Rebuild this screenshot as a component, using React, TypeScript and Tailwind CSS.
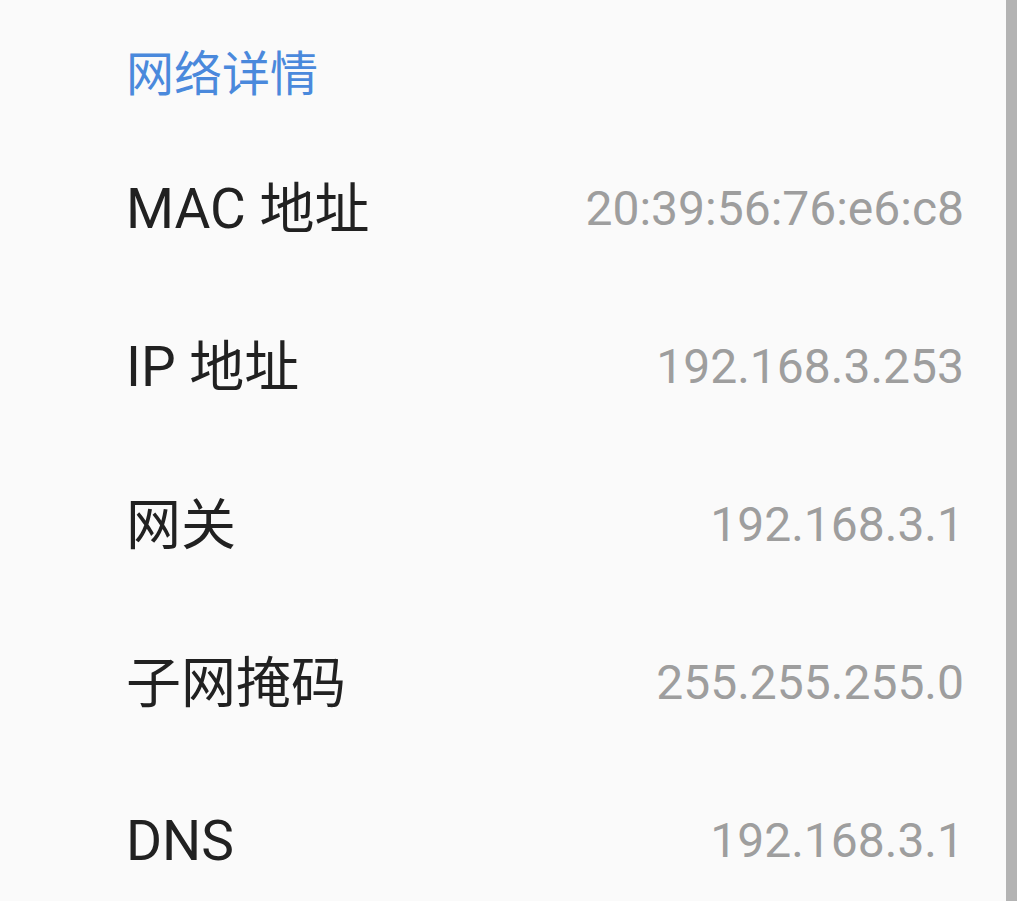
import React from "react";

const rows: [string, string][] = [
  ["MAC 地址", "20:39:56:76:e6:c8"],
  ["IP 地址", "192.168.3.253"],
  ["网关", "192.168.3.1"],
  ["子网掩码", "255.255.255.0"],
  ["DNS", "192.168.3.1"],
];

export default function App() {
  return (
    <div
      className="flex h-[901px] w-full overflow-hidden bg-[#fafafa]"
      style={{ fontFamily: 'Roboto, "Noto Sans CJK SC", sans-serif' }}
    >
      <div className="flex flex-1 flex-col">
        <div className="h-[130px] shrink-0 pl-[126px] pt-[45px]">
          <div className="text-[48px] leading-[60px] text-[#4a89dc]">网络详情</div>
        </div>
        {rows.map(([k, v]) => (
          <div
            key={k}
            className="flex h-[158px] shrink-0 items-center justify-between pl-[126px] pr-[42px]"
          >
            <div className="text-[55px] leading-[64px] text-[#212121]">{k}</div>
            <div className="text-[48px] leading-[60px] text-[#9e9e9e]">{v}</div>
          </div>
        ))}
      </div>
      <div className="w-[11px] shrink-0 bg-[#b3b3b3]" />
    </div>
  );
}
